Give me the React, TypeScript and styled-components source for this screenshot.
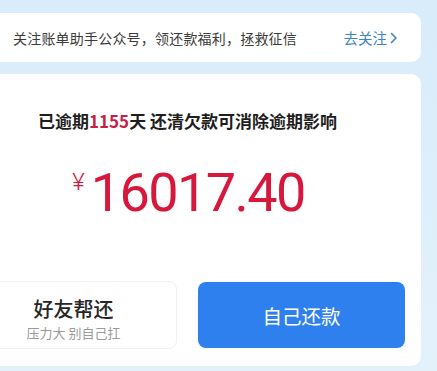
import React from "react";
import styled, { createGlobalStyle } from "styled-components";

const Global = createGlobalStyle`
  html, body { margin: 0; padding: 0; }
  body {
    width: 437px;
    height: 371px;
    overflow: hidden;
    background: #ddeefa;
    font-family: "Noto Sans CJK SC", "Noto Sans", sans-serif;
  }
`;

const Page = styled.div`
  width: 437px;
  height: 371px;
  overflow: hidden;
  background: linear-gradient(180deg, #d9ecfa 0%, #e3f1fb 100%);
  padding-top: 13px;
  box-sizing: border-box;
`;

const Banner = styled.div`
  margin-left: -20px;
  margin-right: 16px;
  height: 49px;
  background: #ffffff;
  border-radius: 10px;
  display: flex;
  align-items: center;
  justify-content: space-between;
  padding: 0 23px 0 33px;
  box-sizing: border-box;
`;

const BannerText = styled.span`
  font-size: 14px;
  letter-spacing: 0.2px;
  color: #3b3b3b;
`;

const BannerLink = styled.span`
  display: flex;
  align-items: center;
  gap: 3px;
  font-size: 14.5px;
  color: #3f84c4;
`;

const Card = styled.div`
  margin-top: 12px;
  margin-left: -49px;
  width: 470px;
  height: 292px;
  background: #ffffff;
  border-radius: 10px;
  box-sizing: border-box;
  padding: 35px 16px 0 19px;
  display: flex;
  flex-direction: column;
  align-items: center;
`;

const Title = styled.div`
  font-size: 17px;
  font-weight: 700;
  color: #1e1e1e;
  line-height: 24px;
  white-space: pre;
`;

const Days = styled.span`
  color: #c51f47;
`;

const AmountRow = styled.div`
  margin-top: 30px;
  padding-left: 2px;
  display: flex;
  align-items: flex-start;
  color: #d5183c;
  font-family: Roboto, "Liberation Sans", sans-serif;
`;

const Yen = styled.span`
  font-size: 24px;
  line-height: 24px;
  font-weight: 300;
  margin-top: 7px;
  margin-right: 6px;
`;

const Amount = styled.span`
  font-size: 54px;
  line-height: 60px;
  letter-spacing: -1.6px;
`;

const Actions = styled.div`
  margin-top: 58px;
  width: 100%;
  display: grid;
  grid-template-columns: 1fr 1fr;
  gap: 21px;
`;

const FriendButton = styled.div`
  height: 68px;
  border: 1px solid #f1f1f1;
  border-radius: 8px;
  box-sizing: border-box;
  display: flex;
  flex-direction: column;
  align-items: center;
  justify-content: center;
  padding-top: 7px;
`;

const FriendTitle = styled.div`
  font-size: 20px;
  line-height: 28px;
  font-weight: 500;
  color: #262626;
`;

const FriendSub = styled.div`
  font-size: 13px;
  line-height: 18px;
  margin-top: 1px;
  color: #9a9a9a;
`;

const PayButton = styled.div`
  height: 66px;
  margin-top: 1px;
  border-radius: 8px;
  background: #2f80ef;
  color: #ffffff;
  font-size: 19.5px;
  display: flex;
  align-items: center;
  justify-content: center;
`;

const Chevron = () => (
  <svg width="8" height="12" viewBox="0 0 8 12" fill="none">
    <path d="M1.5 1.5L6 6L1.5 10.5" stroke="#3f84c4" strokeWidth="1.6" strokeLinecap="round" strokeLinejoin="round" />
  </svg>
);

export default function App() {
  return (
    <Page>
      <Global />
      <Banner>
        <BannerText>关注账单助手公众号，领还款福利，拯救征信</BannerText>
        <BannerLink>
          去关注
          <Chevron />
        </BannerLink>
      </Banner>
      <Card>
        <Title>
          已逾期<Days>1155</Days>天 还清欠款可消除逾期影响
        </Title>
        <AmountRow>
          <Yen>¥</Yen>
          <Amount>16017.40</Amount>
        </AmountRow>
        <Actions>
          <FriendButton>
            <FriendTitle>好友帮还</FriendTitle>
            <FriendSub>压力大 别自己扛</FriendSub>
          </FriendButton>
          <PayButton>自己还款</PayButton>
        </Actions>
      </Card>
    </Page>
  );
}
